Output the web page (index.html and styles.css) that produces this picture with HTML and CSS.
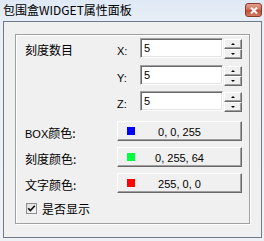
FILE: index.html
```html
<!DOCTYPE html>
<html lang="zh-CN">
<head>
  <meta charset="UTF-8">
  <meta name="viewport" content="width=device-width, initial-scale=1.0">
  <title>包围盒WIDGET属性面板</title>
  <link rel="stylesheet" href="styles.css">
</head>
<body>
  <div class="window">
    <div class="titlebar">
      <span class="title">包围盒WIDGET属性面板</span>
      <span class="close">
        <svg width="8" height="7" viewBox="0 0 8 7"><path d="M1 0.5 L7 6.5 M7 0.5 L1 6.5" stroke="#fff" stroke-width="2"/></svg>
      </span>
    </div>

    <div class="panel">
      <div class="group">
        <div class="row">
          <span class="label">刻度数目</span>
          <span class="axis">X:</span>
          <span class="field">5</span>
          <span class="spin"><span class="spin-btn"><i class="up"></i></span><span class="spin-btn"><i class="down"></i></span></span>
        </div>
        <div class="row row-y">
          <span class="label"></span>
          <span class="axis">Y:</span>
          <span class="field">5</span>
          <span class="spin"><span class="spin-btn"><i class="up"></i></span><span class="spin-btn"><i class="down"></i></span></span>
        </div>
        <div class="row row-z">
          <span class="label"></span>
          <span class="axis">Z:</span>
          <span class="field">5</span>
          <span class="spin"><span class="spin-btn"><i class="up"></i></span><span class="spin-btn"><i class="down"></i></span></span>
        </div>

        <div class="row color-row first-color">
          <span class="label"><span class="latin">BOX</span>颜色:</span>
          <span class="color-btn"><span class="swatch blue"></span><span class="color-text">0, 0, 255</span></span>
        </div>
        <div class="row color-row">
          <span class="label">刻度颜色:</span>
          <span class="color-btn"><span class="swatch green"></span><span class="color-text">0, 255, 64</span></span>
        </div>
        <div class="row color-row">
          <span class="label">文字颜色:</span>
          <span class="color-btn"><span class="swatch red"></span><span class="color-text">255, 0, 0</span></span>
        </div>

        <label class="check-row">
          <span class="checkbox">
            <svg width="9" height="9" viewBox="0 0 9 9"><path d="M1.2 4.2 L3.4 6.6 L7.8 1.8" fill="none" stroke="#111" stroke-width="1.7"/></svg>
          </span>
          <span class="check-text">是否显示</span>
        </label>
      </div>
    </div>
  </div>
</body>
</html>
```

FILE: styles.css
```css
* { box-sizing: border-box; }
html, body { margin: 0; padding: 0; }
body {
  width: 264px;
  height: 241px;
  overflow: hidden;
  font-family: "Noto Sans CJK SC", "Liberation Sans", sans-serif;
  font-size: 12px;
  color: #000;
}

.window {
  width: 264px;
  height: 241px;
  display: flex;
  flex-direction: column;
  background: linear-gradient(#dfe9f5, #eaf0f7 30px, #eef2f7);
}

/* title bar */
.titlebar {
  height: 21px;
  display: flex;
  align-items: center;
  justify-content: space-between;
  padding: 0 2px 0 3px;
}
.title {
  font-size: 12px;
  line-height: 14px;
  color: #000;
  margin-top: -1px;
}
.close {
  width: 17px;
  height: 14px;
  margin-top: -1px;
  display: flex;
  align-items: center;
  justify-content: center;
  border: 1px solid #8a3a2c;
  border-radius: 3px;
  background: linear-gradient(#e5a08e, #d06a52 50%, #c14b33 51%, #d27a5f);
}

/* client area */
.panel {
  flex: 1;
  margin: 0 2px 3px 3px;
  border: 1px solid #6f7b88;
  background: #f0f0f0;
  padding: 12px 11px 0 11px;
}

.group {
  height: 190px;
  border: 1px solid #a0a0a0;
  box-shadow: inset 1px 1px 0 #fff, 1px 1px 0 #fff;
  padding: 3px 7px 0 9px;
  display: flex;
  flex-direction: column;
}

.row {
  display: flex;
  height: 20px;
  align-items: flex-start;
}
.row-y { margin-top: 7px; }
.row-z { margin-top: 6px; }
.color-row { margin-top: 6px; }
.color-row.first-color { margin-top: 10px; }

.label {
  width: 92px;
  flex: none;
  line-height: 20px;
  padding-top: 2px;
  white-space: nowrap;
}
.latin {
  font-family: "Liberation Sans", sans-serif;
  font-size: 11px;
}
.axis {
  width: 23px;
  flex: none;
  font-family: "Liberation Sans", sans-serif;
  font-size: 11px;
  line-height: 20px;
  padding-top: 3px;
}

/* sunken edit field */
.field {
  width: 83px;
  height: 20px;
  flex: none;
  background: #fff;
  border-top: 1px solid #a0a0a0;
  border-left: 1px solid #a0a0a0;
  border-right: 1px solid #fff;
  border-bottom: 1px solid #fff;
  box-shadow: inset 1px 1px 0 #696969, inset -1px -1px 0 #e3e3e3;
  font-family: "Liberation Sans", sans-serif;
  font-size: 11px;
  line-height: 18px;
  padding-left: 3px;
}

/* up/down buttons */
.spin {
  width: 18px;
  margin-left: 1px;
  margin-top: 1px;
  display: flex;
  flex-direction: column;
}
.spin-btn {
  height: 10px;
  display: flex;
  align-items: center;
  justify-content: center;
  background: #f0f0f0;
  border-top: 1px solid #fff;
  border-left: 1px solid #fff;
  border-right: 1px solid #696969;
  border-bottom: 1px solid #696969;
  box-shadow: inset -1px -1px 0 #a0a0a0;
}
.spin-btn i {
  width: 0;
  height: 0;
  border-left: 2px solid transparent;
  border-right: 2px solid transparent;
}
.spin-btn .up { border-bottom: 2px solid #000; }
.spin-btn .down { border-top: 2px solid #000; }

/* colour buttons */
.color-btn {
  width: 125px;
  height: 20px;
  flex: none;
  display: flex;
  align-items: center;
  background: #f0f0f0;
  border-top: 1px solid #fff;
  border-left: 1px solid #fff;
  border-right: 1px solid #696969;
  border-bottom: 1px solid #696969;
  box-shadow: inset -1px -1px 0 #a0a0a0;
  padding-left: 9px;
}
.swatch {
  width: 8px;
  height: 8px;
  flex: none;
}
.swatch.blue { background: #0000ff; }
.swatch.green { background: #00ff40; }
.swatch.red { background: #ff0000; }
.color-text {
  flex: 1;
  text-align: center;
  padding-right: 17px;
  font-family: "Liberation Sans", sans-serif;
  font-size: 11px;
  line-height: 14px;
  margin-top: 1px;
}

/* checkbox */
.check-row {
  margin-top: 9px;
  display: flex;
  align-items: center;
  height: 13px;
}
.checkbox {
  width: 11px;
  height: 11px;
  margin-left: 1px;
  display: flex;
  align-items: center;
  justify-content: center;
  border: 1px solid #8e8f8f;
  background: linear-gradient(135deg, #dcdcdc, #fafafa);
}
.check-text {
  margin-left: 5px;
  line-height: 13px;
}
```
